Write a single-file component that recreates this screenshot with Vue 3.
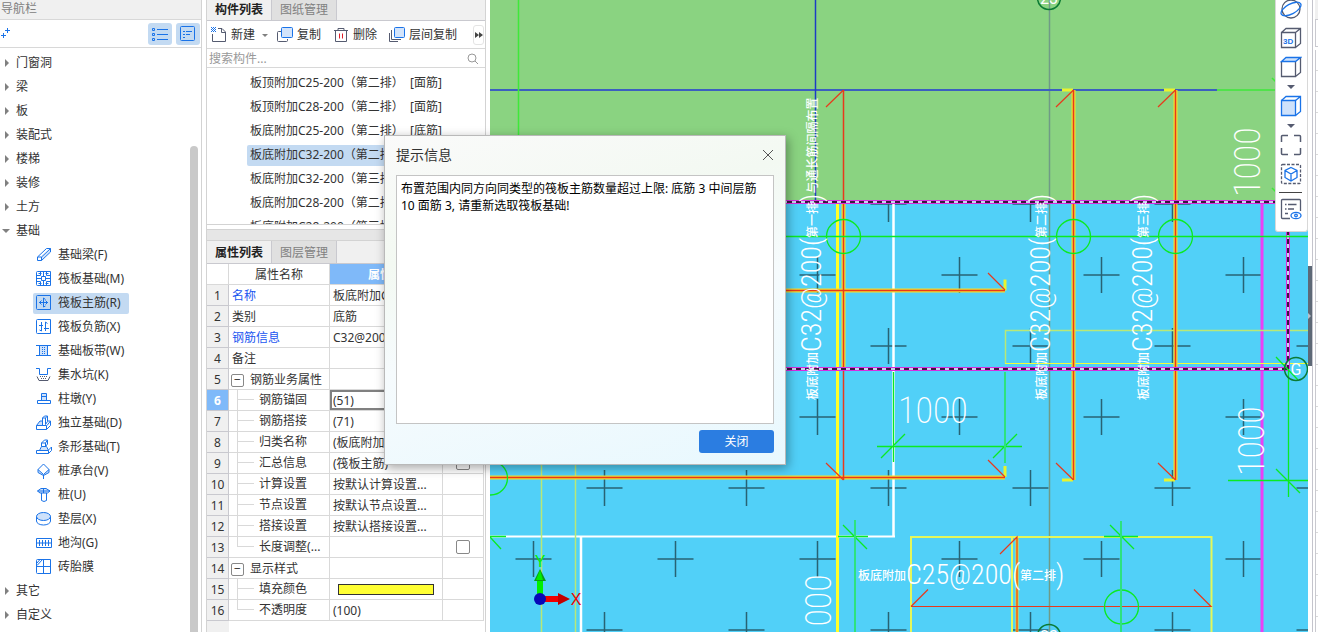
<template>
  <div class="app">
    <aside class="nav">
      <header class="nav-title">导航栏</header>
      <div class="nav-tools">
        <svg class="nav-add" width="11" height="12" viewBox="0 0 11 12" aria-hidden="true">
          <path d="M1 7.500h5M3.500 5v5M5 2.500h5M7.500 0v5" stroke="#1a73e8" fill="none" />
        </svg>
        <button class="view-btn" aria-label="列表视图">
          <svg width="16" height="16" viewBox="0 0 16 16" fill="none" stroke="#1a73e8">
            <path d="M.5 2.500h2v2h-2zM.5 7.500h2v2h-2zM.5 12.500h2v2h-2zM5 3.500h11M5 8.500h11M5 13.500h11" />
          </svg>
        </button>
        <button class="view-btn" aria-label="详细视图">
          <svg width="16" height="16" viewBox="0 0 16 16" fill="none" stroke="#1a73e8">
            <rect x=".5" y=".5" width="14" height="14" rx="1" />
            <path d="M3 5.500h2M6 5.500h6M3 8.500h2M6 8.500h4M3 11.500h2" />
          </svg>
        </button>
      </div>
      <div class="nav-body">
        <ul class="tree">
          <li v-for="g in groups" :key="g.name">
            <button class="tree-group" @click="g.open = !g.open">
              <span class="tri" :class="{ open: g.open }"></span>{{ g.name }}
            </button>
            <ul v-if="g.open && g.children" class="tree-children">
              <li v-for="c in g.children" :key="c.name">
                <button class="tree-item" :class="{ active: c.name === activeNav }" @click="activeNav = c.name">
                  <svg width="16" height="16" viewBox="0 0 16 16" fill="none" stroke="#1a73e8" aria-hidden="true">
                    <path v-if="c.fill" :d="c.fill" fill="#cfe2fb" stroke="none" />
                    <path :d="c.line" />
                    <path v-if="c.gray" :d="c.gray" stroke="#555b70" />
                  </svg>
                  {{ c.name }}
                </button>
              </li>
            </ul>
          </li>
        </ul>
        <div class="scroll"></div>
      </div>
    </aside>

    <section class="panel">
      <div class="tabs">
        <button class="tab on">构件列表</button>
        <button class="tab">图纸管理</button>
      </div>
      <div class="toolbar">
        <button class="tool">
          <svg width="16" height="16" viewBox="0 0 16 16" fill="none" stroke="#555b70">
            <path d="M1.500 7v7.500h13V5L11 1.500H7M10.500 1.500V5.500h4" />
            <path d="M0 .5h1M2 .5h1M4 .5h1M1 1.500h1M3 1.500h1M0 2.500h1M2 2.500h1M4 2.500h1M1 3.500h1M3 3.500h1M0 4.500h1M2 4.500h1M4 4.500h1" stroke="#1a73e8" />
          </svg>新建
        </button>
        <span class="caret"></span>
        <button class="tool">
          <svg width="16" height="16" viewBox="0 0 16 16" fill="none" stroke="#555b70">
            <path d="M4 4.500H1.500a1 1 0 0 0-1 1v8a1 1 0 0 0 1 1h8a1 1 0 0 0 1-1V12" />
            <rect x="4.500" y=".5" width="11" height="10" rx="1" fill="#d3e4fb" stroke="#1a73e8" />
          </svg>复制
        </button>
        <button class="tool">
          <svg width="16" height="16" viewBox="0 0 16 16" fill="none" stroke="#555b70">
            <path d="M1 3.500h14M5 3V1.500h6V3M2.500 4v10.500h11V4" />
            <path d="M6.500 6.500v5M9.500 6.500v5" stroke="#e01e2b" />
          </svg>删除
        </button>
        <button class="tool">
          <svg width="16" height="16" viewBox="0 0 16 16" fill="none" stroke="#555b70">
            <path d="M2.500 3v9.500H12M.5 6v8.500H9" />
            <rect x="5.500" y=".5" width="10" height="10" rx="1" fill="#d3e4fb" stroke="#1a73e8" />
          </svg>层间复制
        </button>
        <button class="more" aria-label="更多">
          <svg width="8" height="6" viewBox="0 0 8 6" fill="#444"><path d="M0 0l4 3-4 3zM4 0l4 3-4 3z" /></svg>
        </button>
      </div>
      <label class="search">
        <input type="text" placeholder="搜索构件..." aria-label="搜索构件" />
        <svg width="12" height="12" viewBox="0 0 12 12" fill="none" stroke="#999">
          <circle cx="5" cy="5" r="4" /><path d="M8 8l3 3" />
        </svg>
      </label>
      <ul class="parts">
        <li v-for="(p, i) in parts" :key="i">
          <button :class="{ active: i === activePart }" @click="activePart = i">{{ p }}</button>
        </li>
      </ul>

      <div class="splitter"></div>
      <div class="tabs lower">
        <button class="tab on">属性列表</button>
        <button class="tab">图层管理</button>
      </div>
      <div class="props-wrap">
        <table class="props">
          <thead>
            <tr>
              <th class="c-num"></th>
              <th class="c-name">属性名称</th>
              <th class="c-val hot">属性值</th>
              <th class="c-ext">附加</th>
            </tr>
          </thead>
          <tbody>
            <tr v-for="(r, i) in props" :key="i" :class="{ current: i === 5 }">
              <th scope="row">{{ i + 1 }}</th>
              <td class="name" :class="[r.kind, { link: r.link }]">
                <span v-if="r.kind === 'group'" class="fold">−</span>
                <span v-else-if="r.kind" class="branch"></span>
                {{ r.name }}
              </td>
              <td class="val">
                <input v-if="i === 5" v-model="r.value" type="text" :aria-label="r.name" />
                <span v-else-if="r.color" class="swatch"></span>
                <template v-else>{{ r.value }}</template>
              </td>
              <td class="ext"><input v-if="r.check" type="checkbox" :aria-label="r.name + '附加'" /></td>
            </tr>
          </tbody>
        </table>
      </div>
    </section>

    <main class="view">
      <svg class="drawing" viewBox="490 0 818 632" preserveAspectRatio="xMinYMin slice" fill="none">
        <defs>
          <clipPath id="slab"><rect x="490" y="203" width="818" height="429" /></clipPath>
        </defs>
        <rect x="490" y="0" width="818" height="202" fill="#8ad381" />
        <rect x="490" y="202" width="818" height="430" fill="#51d0f8" />

        <g clip-path="url(#slab)" stroke="#1b3f48" stroke-opacity=".75" stroke-width="1.500">
          <path v-for="(c, i) in crosses" :key="i" :d="`M${c[0] - 18} ${c[1]}h36M${c[0]} ${c[1] - 18}v36`" />
        </g>

        <!-- axes -->
        <path d="M1049.500 0V632" stroke="#6f9a86" stroke-width="1.500" />
        <path d="M490 90H1217" stroke="#3b5fc0" stroke-width="2" />
        <path d="M815.500 0V202" stroke="#1c3cc4" stroke-width="1.500" />
        <g stroke="#3fe83a" stroke-width="1.500">
          <path d="M518.500 0V135M1217 90H1308M1272 78l4 4M1272 188l4 4" />
        </g>

        <!-- walls -->
        <g stroke="#fff">
          <path d="M893.500 203V536M581 537V632" stroke-width="2.500" />
          <path d="M490 536.500H895" stroke-width="2" />
        </g>
        <path d="M1262 203V632" stroke="#e93ff5" stroke-width="3" />
        <path d="M837.500 203V632" stroke="#ffff28" stroke-width="3" />
        <g stroke="#b9e877" stroke-width="1.500">
          <path d="M541.500 464V632M575.500 464V632M1308 330.500H1005.500V363.500" />
          <path d="M1005 363.500H1308" stroke="#f5ff38" stroke-width="1" />
          <path d="M911 632V537H1211.500V632M1012 537V632" stroke="#e4f75a" stroke-width="2" />
        </g>

        <!-- rebar -->
        <g stroke="#f3dd2c" stroke-width="4">
          <path d="M843.500 203V369" />
          <path d="M1073.500 90V480M1175.500 90V480" />
          <path d="M785 290.500H1005M490 477.500H1005" />
          <path d="M1017 538V632" stroke-width="3" />
        </g>
        <g stroke="#e9f32e" stroke-width="3">
          <path d="M1062 90h11M1164 90h11M1062 480h11M1164 480h11M1005 279.500v11M1005 466v11" />
        </g>
        <g stroke="#e8391c" stroke-width="1.500">
          <path d="M843.500 90V480M1073.500 90V480M1175.500 90V480M785 290.500H1005M490 477.500H1005" />
          <path d="M826 107l17.500-17M1056 107l17.500-17M1158 107l17.500-17" stroke-width="1.200" />
          <path d="M826 463l17.500 17M1056 463l17.500 17M1158 463l17.500 17M988 273l17 17M988 460l17 17" stroke-width="1.200" />
          <path d="M1017 632V537L1000 554M911 606.500H1211l-17-17M911 606.500l17-17" stroke-width="1.200" />
        </g>

        <!-- slab edge -->
        <g stroke="#d82be0" stroke-width="4">
          <path d="M490 202H1308M490 369H1288M1288 203V369" />
        </g>
        <g stroke-width="2">
          <path d="M490 202H1308M490 369H1288M1288 203V369" stroke="#c9d2ee" />
          <path d="M490 202H1308M490 369H1288M1288 203V369" stroke="#371a3e" stroke-dasharray="5 4" />
        </g>

        <!-- dimensions -->
        <g stroke="#0bea22" stroke-width="1.300">
          <path d="M785 236.500H1308" />
          <circle cx="843.500" cy="236.500" r="17" />
          <circle cx="1073.500" cy="236.500" r="17" />
          <circle cx="1175.500" cy="236.500" r="17" />
          <circle cx="490.500" cy="478" r="17" />
          <circle cx="1121.500" cy="607" r="17" />
          <path d="M893.500 372v90M877 446.500h145M881 458l24-24M993 458l24-24" />
          <path d="M490 536.500h16M490 537l11 12M838 536.500h30M843 525l24 24M1110 525l24 24M1104 536.500h34" />
          <path d="M1276 357l22 23M1288.500 369v128M1228 480.500h80M1276 469l24 24" />
        </g>
        <path d="M1005 372v91M855 520v112M1121 521v111" stroke="#2de27e" stroke-width="2" />

        <!-- grid bubbles -->
        <g class="bubble">
          <circle cx="1296" cy="369" r="11.500" /><text x="1296" y="375">G</text>
          <circle cx="1049" cy="-2" r="11.500" /><text x="1049" y="4">23</text>
          <circle cx="1049" cy="636" r="11.500" /><text x="1049" y="642">23</text>
        </g>

        <!-- annotations -->
        <g class="cad">
          <text v-for="(n, i) in notes" :key="i" :transform="n.at">
            <tspan class="cjk" dy="-4">板底附加</tspan><tspan dy="4">{{ n.spec }}</tspan><tspan class="paren">(</tspan><tspan class="cjk" dy="-4">{{ n.row }}</tspan><tspan class="paren" dy="4">)</tspan><tspan class="cjk" dy="-4">{{ n.tail }}</tspan>
          </text>
          <g class="num">
            <text transform="translate(898 423)">1000</text>
            <text transform="translate(1260 197) rotate(-90)">1000</text>
            <text transform="translate(1264 476) rotate(-90)">1000</text>
            <text transform="translate(831 644) rotate(-90)">1000</text>
          </g>
        </g>

        <!-- orientation gizmo -->
        <g>
          <path d="M537 599V580h6v19z" fill="#00f000" />
          <path d="M534 581l6-12 6 12z" fill="#0a9c18" /><path d="M536 580l4-10 3 10z" fill="#00f000" />
          <path d="M540 596h20v6h-20z" fill="#f00000" />
          <path d="M558 593l12 6-12 6z" fill="#c40000" />
          <circle cx="540" cy="599" r="6" fill="#0707b8" />
          <text class="axis" x="540" y="567" fill="#00f000">Y</text>
          <text class="axis" x="576" y="605" fill="#f00000">X</text>
        </g>
      </svg>

      <div class="view-tools">
        <button aria-label="动态观察">
          <svg width="22" height="22" viewBox="0 0 22 22" fill="none" stroke="#555b70" stroke-width="1.300">
            <circle cx="11" cy="11" r="9" />
            <ellipse cx="11" cy="11" rx="11" ry="5" transform="rotate(-28 11 11)" stroke="#1a73e8" />
          </svg>
        </button>
        <button aria-label="三维">
          <svg width="22" height="22" viewBox="0 0 22 22" fill="none" stroke="#555b70" stroke-width="1.300">
            <path d="M1.500 5.500h14v15h-14zM1.500 5.500L6 1.500h14.500v15l-5 4M15.500 5.500l5-4" />
            <text x="3" y="17" class="three-d">3D</text>
          </svg>
        </button>
        <button aria-label="俯视">
          <svg width="22" height="22" viewBox="0 0 22 22" fill="none" stroke="#555b70" stroke-width="1.300">
            <path d="M1.500 5.500v15h14v-15M20.500 1.500v15l-5 4" />
            <path d="M1.500 5.500L6 1.500h14.500l-5 4z" fill="#cfe2fb" stroke="#1a73e8" />
          </svg>
        </button>
        <span class="tri-down"></span>
        <button aria-label="实体显示">
          <svg width="22" height="22" viewBox="0 0 22 22" fill="none" stroke="#1a73e8" stroke-width="1.300">
            <path d="M1.500 5.500h14v15h-14z" fill="#cfe2fb" />
            <path d="M1.500 5.500L6 1.500h14.500v15l-5 4M15.500 5.500l5-4" />
          </svg>
        </button>
        <span class="tri-down"></span>
        <button aria-label="全屏">
          <svg width="22" height="22" viewBox="0 0 22 22" fill="none" stroke="#555b70" stroke-width="1.500">
            <path d="M1.500 8V2.500a1 1 0 0 1 1-1H8M14 1.500h5.500a1 1 0 0 1 1 1V8M1.500 14v5.500a1 1 0 0 0 1 1H8M14 20.500h5.500a1 1 0 0 0 1-1V14" />
          </svg>
        </button>
        <button aria-label="局部三维">
          <svg width="22" height="22" viewBox="0 0 22 22" fill="none" stroke="#555b70" stroke-width="1.300">
            <rect x="1.500" y="1.500" width="19" height="19" rx="1" stroke-dasharray="3 1.500" />
            <path d="M11 4.500l6 3v7l-6 3.500-6-3.500v-7zM5 7.500l6 3.500 6-3.500M11 11v7" stroke="#1a73e8" />
          </svg>
        </button>
        <hr />
        <button aria-label="显示设置">
          <svg width="22" height="22" viewBox="0 0 22 22" fill="none" stroke="#555b70" stroke-width="1.300">
            <path d="M10 20.500H2.500a1 1 0 0 1-1-1v-17a1 1 0 0 1 1-1h17a1 1 0 0 1 1 1V13M5 6.500h1.500M8 6.500h8.500M5 11h1.500M8 11h6M5 15.500h3" />
            <ellipse cx="16" cy="17.500" rx="5" ry="3.200" stroke="#1a73e8" /><circle cx="16" cy="17.500" r="1.300" stroke="#1a73e8" />
          </svg>
        </button>
      </div>
    </main>

    <aside class="edge">
      <button class="edge-handle" aria-label="展开"><span></span></button>
      <div class="edge-dock">
        <div class="edge-head"></div>
        <div class="edge-tab"></div>
        <div class="edge-rows"></div>
      </div>
    </aside>

    <div v-if="dialogOpen" class="dialog" role="dialog" aria-labelledby="dlg-title">
      <header>
        <h2 id="dlg-title">提示信息</h2>
        <button class="dlg-x" aria-label="关闭窗口" @click="dialogOpen = false">
          <svg width="12" height="12" viewBox="0 0 12 12" fill="none" stroke="#555"><path d="M1 1l10 10M11 1L1 11" /></svg>
        </button>
      </header>
      <textarea readonly aria-label="提示内容" :value="message"></textarea>
      <footer><button class="dlg-ok" @click="dialogOpen = false">关闭</button></footer>
    </div>
  </div>
</template>

<script setup>
import { reactive, ref } from 'vue'

const dialogOpen = ref(true)
const message = '布置范围内同方向同类型的筏板主筋数量超过上限: 底筋 3 中间层筋 10 面筋 3, 请重新选取筏板基础!'

const activeNav = ref('筏板主筋(R)')
const activePart = ref(3)

const box = 'M.5 1.500a1 1 0 0 1 1-1h13v14h-13a1 1 0 0 1-1-1z'

const groups = reactive([
  { name: '门窗洞' },
  { name: '梁' },
  { name: '板' },
  { name: '装配式' },
  { name: '楼梯' },
  { name: '装修' },
  { name: '土方' },
  {
    name: '基础',
    open: true,
    children: [
      { name: '基础梁(F)', line: 'M1.500 10L10.500 1.500H14.500V5L5.500 13.500H1.500zM1.500 10H5.500V13.500M5.500 10L14.500 1.500', fill: 'M5.500 10L14 2v3L5.500 13z' },
      { name: '筏板基础(M)', line: box + 'M4.500 .5v4M4.500 10.500v4M10.500 .5v4M10.500 10.500v4M.5 4.500h4M10.500 4.500h4M.5 10.500h4M10.500 10.500h4M5.500 5.500h4v4h-4zM7.500 .5v5M7.500 9.500v5M.5 7.500h5M9.500 7.500h5M2.500 2.500h3M9.500 2.500h3M2.500 12.500h3M9.500 12.500h3' },
      { name: '筏板主筋(R)', line: box + 'M3 7.500h9M7.500 3v9M5.500 5.500L3.500 7.500l2 2M9.500 5.500l2 2-2 2M7.500 3l2 1.500M7.500 12l2-1' },
      { name: '筏板负筋(X)', line: box + 'M3 6.500h4M5.500 3v9L3.500 11M8 9.500h5M9.500 3v9M9.500 3l2 1.500' },
      { name: '基础板带(W)', line: 'M0 2.500h15M0 12.500h15M3.500 2.500v10M11.500 2.500v10M6.500 4v1M6.500 6v1M6.500 8v1M6.500 10v1M8.500 4v1M8.500 6v1M8.500 8v1M8.500 10v1', fill: 'M3 3h9v9H3z' },
      { name: '集水坑(K)', line: 'M0 1.500h3.500v6h8v-6H15', gray: 'M1 9.500l2 4h9l2-4M4 9.500h1M6 9.500h1M8 9.500h1M10 9.500h1M5 11.500h1M7 11.500h1M9 11.500h1' },
      { name: '柱墩(Y)', line: 'M1.500 9.500h13v3h-13zM5.500 9V2.500h5V9M5.500 5.500h5', fill: 'M6 3h4v6H6z' },
      { name: '独立基础(D)', line: 'M.5 10.500h10v4H.5zM.5 10.500L4 6h2M10.500 14.500l4-4V6L11 10.500M6.500 10.500V3l2-2h3v5.500l-2 3M6.500 3h3v6.500M9.500 3l2-2M11.500 6h3', fill: 'M1 10l3-4h3v4z' },
      { name: '条形基础(T)', line: 'M.5 11.500h12v3H.5zM3.500 11.500l2-4h5l2 4M5.500 7.500V4l3-3h3v4l-2 2.500M5.500 4h4V7M9.500 4l2-3M12.500 14.500l3-3V8l-3 3', fill: 'M4 11l2-3h4l2 3z' },
      { name: '桩承台(V)', line: 'M7.500 1L13 6.500v3l-5.500 3-5.500-3v-3zM2 6.500l5.500 5 5.500-5M7.500 12v4', fill: 'M2 6.500l5.500 5 5.500-5v3l-5.500 3-5.500-3z' },
      { name: '桩(U)', line: 'M1.500 4L5 1.500 10 1.500 14 4 11.500 6H4zM5.500 6v7.500q2.500 2 5 0V6M1.500 4h12.500M7.500 1v5', fill: 'M2 4l4-3h4l4 3-3 2H4z' },
      { name: '垫层(X)', line: 'M.5 5.500a7 4 0 0 1 14 0a7 4 0 0 1-14 0v4.500a7 4 0 0 0 14 0V5.500', fill: 'M.5 5.500a7 4 0 0 1 14 0a7 4 0 0 1-14 0' },
      { name: '地沟(G)', line: 'M.5 3.500h15v9H.5zM.5 8h15M3.500 5v6M6.500 5v6M9.500 5v6M12.500 5v6' },
      { name: '砖胎膜', line: box + 'M7.500 .5v14M.5 7.500h14M1 6.500l5.500-6M1 4l3-3.500' },
    ],
  },
  { name: '其它' },
  { name: '自定义' },
])

const parts = [
  '板顶附加C25-200（第二排）  [面筋]',
  '板顶附加C28-200（第二排）  [面筋]',
  '板底附加C25-200（第二排）  [底筋]',
  '板底附加C32-200（第二排）  [底筋]',
  '板底附加C32-200（第三排）  [底筋]',
  '板底附加C28-200（第二排）  [底筋]',
  '板底附加C28-200（第三排）  [底筋]',
]

const props = reactive([
  { name: '名称', value: '板底附加C32-200', link: true },
  { name: '类别', value: '底筋' },
  { name: '钢筋信息', value: 'C32@200', link: true },
  { name: '备注', value: '' },
  { name: '钢筋业务属性', kind: 'group' },
  { name: '钢筋锚固', value: '(51)', kind: 'child' },
  { name: '钢筋搭接', value: '(71)', kind: 'child' },
  { name: '归类名称', value: '(板底附加C32…', kind: 'child' },
  { name: '汇总信息', value: '(筏板主筋)', kind: 'child', check: true },
  { name: '计算设置', value: '按默认计算设置...', kind: 'child' },
  { name: '节点设置', value: '按默认节点设置...', kind: 'child' },
  { name: '搭接设置', value: '按默认搭接设置...', kind: 'child' },
  { name: '长度调整(...', value: '', kind: 'child last', check: true },
  { name: '显示样式', kind: 'group' },
  { name: '填充颜色', color: true, kind: 'child' },
  { name: '不透明度', value: '(100)', kind: 'child last' },
])

// survey crosses sit on a 142px grid, every other row shifted by half a step
const crosses = []
for (let row = 0; row < 7; row++) {
  const start = row % 2 ? 533.5 : 604.5
  for (let x = start; x < 1330; x += 142) crosses.push([x, 204 + row * 71])
}

const notes = [
  { at: 'translate(821 400) rotate(-90)', spec: 'C32@200', row: '第一排', tail: '与通长筋间隔布置' },
  { at: 'translate(1050 400) rotate(-90)', spec: 'C32@200', row: '第二排', tail: '' },
  { at: 'translate(1152 400) rotate(-90)', spec: 'C32@200', row: '第三排', tail: '' },
  { at: 'translate(858 584)', spec: 'C25@200', row: '第二排', tail: '' },
]
</script>

<style>
html,
body {
  margin: 0;
  background: #fff;
}
</style>

<style scoped>
.app {
  position: relative;
  display: flex;
  height: 100vh;
  overflow: hidden;
  font-family: "Noto Sans", "Noto Sans CJK SC", sans-serif;
  font-size: 12px;
  line-height: 16px;
  color: #333;
}

.app * { box-sizing: border-box; }

button {
  font: inherit;
  color: inherit;
  background: none;
  border: 0;
  padding: 0;
  margin: 0;
  white-space: nowrap;
  text-align: left;
}

svg { display: block; flex-shrink: 0; }

ul {
  list-style: none;
  margin: 0;
  padding: 0;
}

/* Navigation */
.nav {
  flex: 0 0 202px;
  display: flex;
  flex-direction: column;
  border-right: 1px solid #d3d3d3;
}

.nav-title {
  height: 20px;
  padding: 1px 1px 0;
  background: #f0f0f0;
  border-bottom: 1px solid #d8d8d8;
  color: #808080;
}

.nav-tools {
  display: flex;
  align-items: center;
  gap: 4px;
  height: 28px;
  padding-right: 1px;
  border-bottom: 1px solid #d8d8d8;
}

.nav-add { margin-right: auto; }

.view-btn {
  display: flex;
  align-items: center;
  justify-content: center;
  width: 24px;
  height: 22px;
  border-radius: 3px;
  background: #c3daf2;
}

.nav-body {
  flex: 1;
  display: flex;
  min-height: 0;
}

.tree {
  flex: 1;
  padding-top: 3px;
}

.tree-group {
  display: flex;
  align-items: center;
  height: 24px;
}

.tri {
  width: 0;
  height: 0;
  margin: 0 7px 0 5px;
  border-left: 4px solid #808080;
  border-top: 4px solid transparent;
  border-bottom: 4px solid transparent;
}

.tri.open {
  margin: 0 6px 0 2px;
  border-top: 4px solid #808080;
  border-left: 4px solid transparent;
  border-right: 4px solid transparent;
  border-bottom: 0;
}

.tree-children li {
  display: flex;
  align-items: center;
  height: 24px;
  padding-left: 33px;
}

.tree-item {
  display: flex;
  align-items: center;
  gap: 6px;
  height: 21px;
  padding: 0 8px 0 3px;
  border-radius: 2px;
}

.tree-item.active { background: #c3daf2; }

.scroll {
  width: 8px;
  margin: 98px 3px 0 0;
  border-radius: 4px 4px 0 0;
  background: #c9c9c9;
}

/* Component panel */
.panel {
  flex: 0 0 280px;
  display: flex;
  flex-direction: column;
  margin: 0 4px;
  border-left: 1px solid #d3d3d3;
  border-right: 1px solid #d3d3d3;
  min-width: 0;
}

.tabs {
  display: flex;
  height: 21px;
  flex-shrink: 0;
  background: #f0f0f0;
  border-bottom: 1px solid #c9c9cf;
}

.tabs.lower { height: 23px; }

.tab {
  width: 65px;
  text-align: center;
  background: #e0e0e0;
  border-right: 1px solid #c9c9cf;
  color: #808080;
}

.tabs.lower .tab { padding-top: 1px; }

.tab.on {
  background: #f0f0f0;
  color: #222;
  font-weight: 700;
}

.toolbar {
  display: flex;
  align-items: center;
  flex-shrink: 0;
  gap: 11px;
  height: 28px;
  padding: 1px 1px 0 4px;
  border-bottom: 1px solid #d8d8d8;
}

.tool {
  display: flex;
  align-items: center;
  gap: 4px;
}

.tool + .tool { padding-left: 1px; }

.caret {
  border: 3px solid transparent;
  border-top-color: #808080;
  border-bottom: 0;
  margin: 0 -2px 0 -4px;
}

.more {
  display: flex;
  align-items: center;
  justify-content: center;
  width: 11px;
  height: 20px;
  margin-left: auto;
  border: 1px solid #e4e4e4;
  border-radius: 3px;
}

.search {
  display: flex;
  align-items: center;
  flex-shrink: 0;
  height: 19px;
  padding: 1px 6px 0 2px;
  border-bottom: 1px solid #d8d8d8;
}

.search input {
  flex: 1;
  min-width: 0;
  border: 0;
  padding: 0;
  outline: 0;
  font: inherit;
}

.search input::placeholder { color: #999; }

.parts {
  flex: 0 0 157px;
  padding: 3px 0 0 40px;
  overflow: hidden;
  border-bottom: 1px solid #d3d3d3;
}

.parts li {
  display: flex;
  align-items: center;
  height: 24px;
}

.parts button {
  height: 21px;
  padding: 0 3px;
  border-radius: 2px;
  white-space: pre;
}

.parts button.active { background: #c3daf2; }

.splitter {
  flex: 0 0 12px;
  margin-top: 4px;
  background: #e6e6e6;
  border-top: 1px solid #d3d3d3;
  border-bottom: 1px solid #d3d3d3;
}

/* Property grid */
.props-wrap {
  flex: 1;
  min-height: 0;
  overflow: hidden;
  background: linear-gradient(90deg, #f0f0f0 22px, #fff 22px);
}

.props {
  width: 277px;
  table-layout: fixed;
  border-collapse: separate;
  border-spacing: 0;
}

.props th,
.props td {
  height: 21px;
  padding: 1px 3px 0;
  border-right: 1px solid #d9d9d9;
  border-bottom: 1px solid #d9d9d9;
  background: #fff;
  font-weight: 400;
  line-height: 19px;
  text-align: left;
  white-space: nowrap;
  overflow: hidden;
}

.props thead th { text-align: center; }
.props thead th.hot { background: #7fb9f9; color: #fff; font-weight: 700; }
.c-num { width: 22px; }
.c-name { width: 101px; }
.c-val { width: 113px; }

.props tbody th {
  padding: 1px 0 0;
  text-align: center;
  background: #f0f0f0;
  border-color: #c9c9cf;
}

.props .current th {
  background: #7fb9f9;
  color: #fff;
  font-weight: 700;
}

.props .link { color: #1a56f0; }

.props .group { padding: 0 0 0 2px; }

.fold {
  display: inline-block;
  width: 13px;
  height: 13px;
  margin-right: 3px;
  border: 1px solid #888;
  border-radius: 2px;
  line-height: 10px;
  text-align: center;
  vertical-align: middle;
}

.props .child {
  padding: 0 0 0 8px;
  line-height: 20px;
}

.branch {
  display: inline-block;
  width: 17px;
  height: 20px;
  margin-right: 2px;
  vertical-align: top;
  background:
    linear-gradient(#d9d9d9, #d9d9d9) 0 0 / 1px 100% no-repeat,
    linear-gradient(#d9d9d9, #d9d9d9) 0 9px / 100% 1px no-repeat;
}

.last .branch {
  background-size: 1px 10px, 100% 1px;
}

.props .current .val { padding: 0; }

.current .val input {
  display: block;
  width: 100%;
  height: 20px;
  padding: 1px 1px 0;
  border: 2px solid #808080;
  font: inherit;
  line-height: 15px;
  color: inherit;
}

.swatch {
  display: block;
  width: 96px;
  height: 11px;
  margin-left: 5px;
  background: #ffff33;
  border: 1px solid #333;
}

.props .ext {
  padding: 0;
  text-align: center;
}

.ext input {
  appearance: none;
  display: block;
  width: 14px;
  height: 14px;
  margin: 0 auto;
  border: 1px solid #888;
  border-radius: 2px;
}

/* Model view */
.view {
  position: relative;
  flex: 1;
  min-width: 0;
  overflow: hidden;
  background: #51d0f8;
}

.drawing {
  width: 100%;
  height: 100%;
}

.cad text {
  fill: #fff;
  font-family: "Liberation Sans Narrow", "Roboto Condensed", Roboto, sans-serif;
  font-size: 28px;
  font-weight: 300;
}

.cad .cjk {
  font-family: "Noto Sans CJK SC", sans-serif;
  font-size: 12px;
  font-weight: 500;
}

.cad .num text {
  font-size: 36px;
  font-weight: 200;
}

.bubble circle { stroke: #0b7a34; stroke-width: 1.5px; }

.bubble text {
  fill: #fff;
  font-family: Roboto, sans-serif;
  font-size: 16px;
  text-anchor: middle;
}

.axis {
  font-family: "Liberation Sans", sans-serif;
  font-size: 16px;
  text-anchor: middle;
}

.three-d {
  fill: #1a73e8;
  stroke: none;
  font-family: "Liberation Sans", sans-serif;
  font-size: 8px;
  font-weight: 700;
}

.view-tools {
  position: absolute;
  top: 0;
  right: 0;
  display: flex;
  flex-direction: column;
  align-items: center;
  width: 33px;
  height: 232px;
  padding-right: 2px;
  background: #fff;
  border: 1px solid #d8d8d8;
  border-top: 0;
  border-radius: 0 0 3px 3px;
}

.view-tools button { margin-bottom: 7px; }
.view-tools button:first-child { margin-top: -2px; }

.tri-down {
  border: 4px solid transparent;
  border-top-color: #555b70;
  border-bottom: 0;
  margin-bottom: 6px;
}

.view-tools hr {
  width: 23px;
  margin: 0 0 5px;
  border: 0;
  border-top: 1px solid #444;
}

/* Docked edge */
.edge {
  flex: 0 0 10px;
  display: flex;
  align-items: center;
}

.edge-handle {
  display: flex;
  align-items: center;
  width: 4px;
  height: 100px;
  background: #5d6876;
}

.edge-handle span {
  border: 3px solid transparent;
  border-left-color: #b9bfc9;
  border-right: 0;
}

.edge-dock {
  flex: 1;
  align-self: stretch;
  display: flex;
  flex-direction: column;
  padding-left: 2px;
  border-left: 1px solid #c4c4cc;
}

.edge-head {
  height: 20px;
  background: #f0f0f0;
  border-bottom: 1px solid #c9c9cf;
}

.edge-tab {
  height: 27px;
  margin-bottom: 3px;
  border-left: 1px solid #c9c9cf;
  border-bottom: 1px solid #c9c9cf;
}

.edge-rows {
  flex: 1;
  border-left: 1px solid #c9c9cf;
  background: repeating-linear-gradient(#fff 0 20px, #d9d9d9 20px 21px);
}

/* Message dialog */
.dialog {
  position: absolute;
  left: 384px;
  top: 135px;
  display: flex;
  flex-direction: column;
  width: 402px;
  height: 330px;
  padding: 0 11px 11px;
  border: 1px solid #b9b9b9;
  background: linear-gradient(165deg, #fafafa 0%, #f3f9f2 30%, #f6fbfd 55%, #e8f8fe 100%);
  box-shadow: 2px 3px 10px rgba(0, 0, 0, 0.35);
}

.dialog header {
  display: flex;
  align-items: center;
  justify-content: space-between;
  height: 39px;
  padding-bottom: 2px;
}

.dialog h2 {
  margin: 0;
  font-size: 14px;
  font-weight: 400;
}

.dialog textarea {
  flex: 1;
  padding: 4px;
  border: 1px solid #c4c4c4;
  outline: 0;
  resize: none;
  background: #fff;
  color: #000;
  font: inherit;
  line-height: 17px;
}

.dialog footer {
  display: flex;
  justify-content: flex-end;
  padding-top: 6px;
}

.dlg-ok {
  width: 75px;
  height: 23px;
  padding-top: 1px;
  border-radius: 3px;
  background: #2b7de1;
  color: #fff;
  text-align: center;
}
</style>
